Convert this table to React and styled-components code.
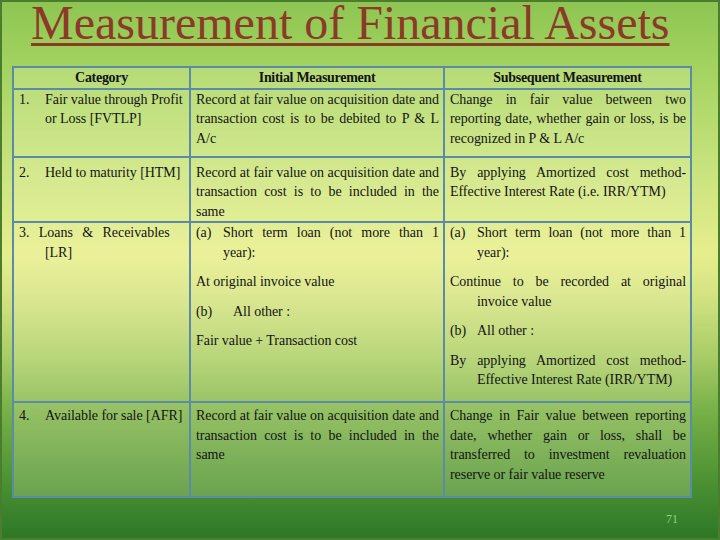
import styled, { createGlobalStyle } from 'styled-components'

const GlobalStyle = createGlobalStyle`
  html, body {
    margin: 0;
    padding: 0;
  }
  body {
    font-family: "Liberation Serif", "Times New Roman", serif;
  }
`

const Slide = styled.div`
  width: 720px;
  height: 540px;
  box-sizing: border-box;
  overflow: hidden;
  padding-top: 1px;
  background: linear-gradient(
    to bottom,
    #8dc552 0%,
    #a6d462 14%,
    #c6e27c 30%,
    #e6ee8c 47%,
    #d6e484 54%,
    #a8cc66 66%,
    #78b048 76%,
    #4f9434 88%,
    #2c7626 100%
  );
  box-shadow: inset 0 0 0 2px #4b7d2f;
`

const Title = styled.h1`
  margin: 0;
  padding-left: 31px;
  font-family: "Liberation Serif", "Times New Roman", serif;
  font-weight: normal;
  font-size: 48px;
  line-height: 43px;
  color: #8c3a28;
  text-decoration: underline;
  text-decoration-thickness: 3px;
  text-underline-offset: 4px;
  white-space: nowrap;
`

const Table = styled.table`
  margin: 22px 0 0 12px;
  border-collapse: collapse;
  table-layout: fixed;
  width: 678px;
  font-size: 14px;
  letter-spacing: -0.05px;
  line-height: 19.5px;
  color: #141414;
`

const Row = styled.tr`
  height: ${p => p.$h}px;
`

const Head = styled.th`
  border: 2px solid #5a8ca8;
  background: rgba(250, 252, 200, 0.22);
  font-weight: bold;
  letter-spacing: -0.3px;
  text-align: center;
  padding: 0 4px;
  vertical-align: middle;
`

const Cell = styled.td`
  border: 2px solid #5a8ca8;
  background: rgba(250, 252, 200, 0.22);
  vertical-align: top;
  padding: ${p => p.$pt || 0}px 4px 0 5px;
  text-align: ${p => (p.$justify ? 'justify' : 'left')};
`

const P = styled.p`
  margin: 0;
  padding-left: ${p => p.$hang || 0}px;
  text-indent: -${p => p.$hang || 0}px;
  word-spacing: ${p => p.$ws || 0}px;
  & + & {
    margin-top: 10px;
  }
`

const Label = styled.span`
  display: inline-block;
  text-indent: 0;
  width: ${p => p.$w || 26}px;
`

const Footer = styled.div`
  margin-top: 14px;
  padding-right: 42px;
  text-align: right;
  font-size: 12px;
  color: #93cf86;
`

export default function App() {
  return (
    <Slide>
      <GlobalStyle />
      <Title>Measurement of Financial Assets</Title>
      <Table>
        <colgroup>
          <col style={{ width: 177 }} />
          <col style={{ width: 254 }} />
          <col style={{ width: 247 }} />
        </colgroup>
        <thead>
          <Row $h={21}>
            <Head>Category</Head>
            <Head>Initial Measurement</Head>
            <Head>Subsequent Measurement</Head>
          </Row>
        </thead>
        <tbody>
          <Row $h={68}>
            <Cell>
              <P $hang={26}><Label>1.</Label>Fair value through Profit or Loss [FVTLP]</P>
            </Cell>
            <Cell $justify>
              <P>Record at fair value on acquisition date and transaction cost is to be debited to P &amp; L A/c</P>
            </Cell>
            <Cell $justify>
              <P>Change in fair value between two reporting date, whether gain or loss, is be recognized in P &amp; L A/c</P>
            </Cell>
          </Row>
          <Row $h={64}>
            <Cell $pt={5}>
              <P $hang={26}><Label>2.</Label>Held to maturity [HTM]</P>
            </Cell>
            <Cell $pt={5} $justify>
              <P>Record at fair value on acquisition date and transaction cost is to be included in the same</P>
            </Cell>
            <Cell $pt={5} $justify>
              <P>By applying Amortized cost method- Effective Interest Rate (i.e. IRR/YTM)</P>
            </Cell>
          </Row>
          <Row $h={180}>
            <Cell>
              <P $hang={26} $ws={6}>3. Loans &amp; Receivables<br />[LR]</P>
            </Cell>
            <Cell $justify>
              <P $hang={27}><Label $w={27}>(a)</Label>Short term loan (not more than 1 year):</P>
              <P>At original invoice value</P>
              <P><Label $w={37}>(b)</Label>All other :</P>
              <P>Fair value + Transaction cost</P>
            </Cell>
            <Cell $justify>
              <P $hang={27}><Label $w={27}>(a)</Label>Short term loan (not more than 1 year):</P>
              <P $hang={27}>Continue to be recorded at original invoice value</P>
              <P $hang={27}><Label $w={27}>(b)</Label>All other :</P>
              <P $hang={27}>By applying Amortized cost method- Effective Interest Rate (IRR/YTM)</P>
            </Cell>
          </Row>
          <Row $h={95}>
            <Cell $pt={3}>
              <P $hang={26}><Label>4.</Label>Available for sale [AFR]</P>
            </Cell>
            <Cell $pt={3} $justify>
              <P>Record at fair value on acquisition date and transaction cost is to be included in the same</P>
            </Cell>
            <Cell $pt={3} $justify>
              <P>Change in Fair value between reporting date, whether gain or loss, shall be transferred to investment revaluation reserve or fair value reserve</P>
            </Cell>
          </Row>
        </tbody>
      </Table>
      <Footer>71</Footer>
    </Slide>
  )
}
